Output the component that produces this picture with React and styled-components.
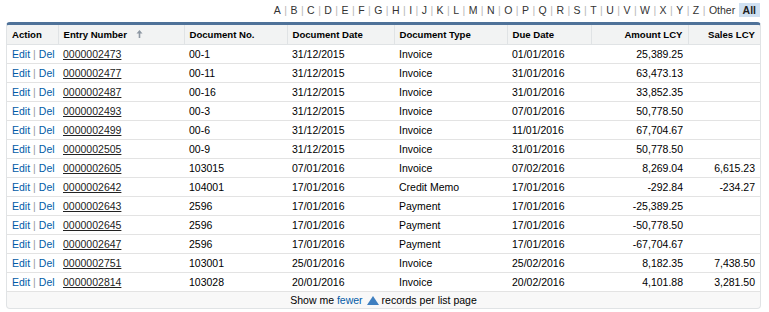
import styled, { createGlobalStyle } from 'styled-components';

const GlobalStyle = createGlobalStyle`
  body {
    margin: 0;
    background: #fff;
    font-family: 'Liberation Sans', Arial, sans-serif;
    color: #000;
  }
`;

const letters = 'ABCDEFGHIJKLMNOPQRSTUVWXYZ'.split('');

const columns = [
  { key: 'action', label: 'Action', width: 51 },
  { key: 'entry', label: 'Entry Number', width: 126, sorted: true },
  { key: 'docNo', label: 'Document No.', width: 103 },
  { key: 'docDate', label: 'Document Date', width: 107 },
  { key: 'docType', label: 'Document Type', width: 113 },
  { key: 'due', label: 'Due Date', width: 84 },
  { key: 'amount', label: 'Amount LCY', width: 97, right: true },
  { key: 'sales', label: 'Sales LCY', width: 72, right: true },
];

const rows = [
  ['0000002473', '00-1', '31/12/2015', 'Invoice', '01/01/2016', '25,389.25', ''],
  ['0000002477', '00-11', '31/12/2015', 'Invoice', '31/01/2016', '63,473.13', ''],
  ['0000002487', '00-16', '31/12/2015', 'Invoice', '31/01/2016', '33,852.35', ''],
  ['0000002493', '00-3', '31/12/2015', 'Invoice', '07/01/2016', '50,778.50', ''],
  ['0000002499', '00-6', '31/12/2015', 'Invoice', '11/01/2016', '67,704.67', ''],
  ['0000002505', '00-9', '31/12/2015', 'Invoice', '31/01/2016', '50,778.50', ''],
  ['0000002605', '103015', '07/01/2016', 'Invoice', '07/02/2016', '8,269.04', '6,615.23'],
  ['0000002642', '104001', '17/01/2016', 'Credit Memo', '17/01/2016', '-292.84', '-234.27'],
  ['0000002643', '2596', '17/01/2016', 'Payment', '17/01/2016', '-25,389.25', ''],
  ['0000002645', '2596', '17/01/2016', 'Payment', '17/01/2016', '-50,778.50', ''],
  ['0000002647', '2596', '17/01/2016', 'Payment', '17/01/2016', '-67,704.67', ''],
  ['0000002751', '103001', '25/01/2016', 'Invoice', '25/02/2016', '8,182.35', '7,438.50'],
  ['0000002814', '103028', '20/01/2016', 'Invoice', '20/02/2016', '4,101.88', '3,281.50'],
];

const SortArrow = () => (
  <svg width="7" height="8" viewBox="0 0 7 8" style={{ marginLeft: 9, verticalAlign: 0 }}>
    <path d="M3.5 0 L6.5 3.5 L4.3 3.5 L4.3 8 L2.7 8 L2.7 3.5 L0.5 3.5 Z" fill="#8e98a3" />
  </svg>
);

const UpTriangle = () => (
  <svg width="12" height="9" viewBox="0 0 12 9" style={{ margin: '0 3px 0 4px', verticalAlign: -1 }}>
    <path d="M6 0 L12 9 L0 9 Z" fill="#3f7fc0" />
  </svg>
);

export default function App() {
  return (
    <Page>
      <GlobalStyle />
      <AlphaBar>
        {letters.map((l) => (
          <span key={l}>
            <Letter>{l}</Letter>
            <Pipe>|</Pipe>
          </span>
        ))}
        <Letter>Other</Letter>
        <Letter $active>All</Letter>
      </AlphaBar>
      <ListBox>
        <Table>
          <colgroup>
            {columns.map((c) => (
              <col key={c.key} style={{ width: c.width }} />
            ))}
          </colgroup>
          <thead>
            <tr>
              {columns.map((c) => (
                <HeadCell key={c.key} $right={c.right}>
                  {c.label}
                  {c.sorted && <SortArrow />}
                </HeadCell>
              ))}
            </tr>
          </thead>
          <tbody>
            {rows.map((r) => (
              <Row key={r[0]}>
                <Cell>
                  <ActionLink>Edit</ActionLink>
                  <ActionPipe>|</ActionPipe>
                  <ActionLink>Del</ActionLink>
                </Cell>
                <Cell>
                  <EntryLink>{r[0]}</EntryLink>
                </Cell>
                <Cell>{r[1]}</Cell>
                <Cell>{r[2]}</Cell>
                <Cell>{r[3]}</Cell>
                <Cell>{r[4]}</Cell>
                <Cell $right>{r[5]}</Cell>
                <Cell $right>{r[6]}</Cell>
              </Row>
            ))}
          </tbody>
        </Table>
        <Footer>
          Show me <FooterLink>fewer</FooterLink>
          <UpTriangle />
          records per list page
        </Footer>
      </ListBox>
    </Page>
  );
}

const Page = styled.div`
  width: 755px;
  padding: 0 8px 0 6px;
`;

const AlphaBar = styled.div`
  display: flex;
  justify-content: flex-end;
  align-items: center;
  height: 20px;
  padding-right: 1px;
  margin-bottom: 2px;
  font-size: 10.5px;
  color: #333;
`;

const Letter = styled.span`
  padding: 1px ${(p) => (p.$active ? 4 : 3.45)}px;
  font-weight: ${(p) => (p.$active ? 700 : 400)};
  background: ${(p) => (p.$active ? '#cfe0f1' : 'transparent')};
  color: ${(p) => (p.$active ? '#222' : '#333')};
`;

const Pipe = styled.span`
  color: #b8b8b8;
`;

const ListBox = styled.div`
  border: 1px solid #e0e3e5;
  border-top: 3px solid #4f7299;
  border-radius: 4px;
  background: #f8f8f8;
  overflow: hidden;
`;

const Table = styled.table`
  width: 100%;
  table-layout: fixed;
  border-collapse: collapse;
  font-size: 10.5px;
`;

const HeadCell = styled.th`
  height: 19px;
  padding: 0 5px;
  background: #f2f3f3;
  border-bottom: 1px solid #e0e3e5;
  border-left: 1px solid #e0e3e5;
  font-size: 9.6px;
  font-weight: 700;
  text-align: ${(p) => (p.$right ? 'right' : 'left')};
  color: #000;
  white-space: nowrap;
  &:first-child {
    border-left: none;
  }
`;

const Row = styled.tr`
  background: #fff;
`;

const Cell = styled.td`
  height: 18px;
  padding: 0 5px;
  border-bottom: 1px solid #e3e3e3;
  text-align: ${(p) => (p.$right ? 'right' : 'left')};
  color: #000;
  white-space: nowrap;
`;

const ActionLink = styled.span`
  color: #015ba7;
`;

const ActionPipe = styled.span`
  color: #999;
  margin: 0 3px;
`;

const EntryLink = styled.span`
  color: #222;
  text-decoration: underline;
`;

const Footer = styled.div`
  height: 16px;
  line-height: 16px;
  text-align: center;
  font-size: 10.5px;
  color: #000;
`;

const FooterLink = styled.span`
  color: #015ba7;
`;
